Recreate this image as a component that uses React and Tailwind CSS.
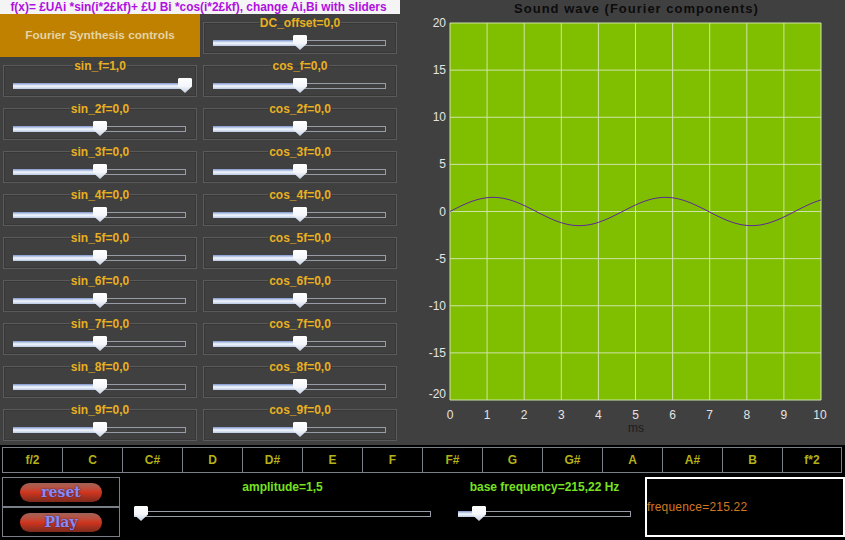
import React from "react";

const notes = ["f/2", "C", "C#", "D", "D#", "E", "F", "F#", "G", "G#", "A", "A#", "B", "f*2"];
const harmonics = ["2f", "3f", "4f", "5f", "6f", "7f", "8f", "9f"];

const Thumb = () => (
  <svg width="14" height="15" viewBox="0 0 14 15" className="block">
    <defs>
      <linearGradient id="thumbFill" x1="0" y1="0" x2="0" y2="1">
        <stop offset="0" stopColor="#ffffff" />
        <stop offset="0.55" stopColor="#f4f6fa" />
        <stop offset="1" stopColor="#c4cfe2" />
      </linearGradient>
    </defs>
    <path d="M1 0H13L14 1V8.5L7 15L0 8.5V1Z" fill="url(#thumbFill)" />
  </svg>
);

const Slider = ({ percent, width = "w-[173px]" }) => (
  <div className={`relative h-[6px] ${width} border border-[#979ca6]`}>
    <div
      className="h-[6px] -mt-[1px] -ml-[1px] bg-gradient-to-b from-[#7f96cc] via-[#f4f8fd] to-[#b9c8e2]"
      style={{ width: `${percent}%` }}
    />
    <div
      className="absolute top-[-6px] -ml-[7px]"
      style={{ left: `${percent}%` }}
    >
      <Thumb />
    </div>
  </div>
);

const SliderCell = ({ label, percent = 50 }) => (
  <div className="h-full flex flex-col justify-end px-[3px] pb-[3px]">
    <fieldset className="h-[40px] border border-[#5a5a5a] shadow-[inset_0_0_0_1px_#383838]">
      <legend className="mx-auto px-[1px] pt-[2px] text-[12px] leading-[14px] font-bold text-[#e8b020]">{label}</legend>
      <div className="mt-[10px] ml-[9px]">
        <Slider percent={percent} />
      </div>
    </fieldset>
  </div>
);

const PillButton = ({ label }) => (
  <div className="h-[30px] flex items-center justify-center border border-[#7a7f88]">
    <button className="w-[82px] h-[19px] rounded-full bg-gradient-to-b from-[#a06258] via-[#d0341c] to-[#7c2a1e] font-['DejaVu_Serif',serif] text-[14px] font-bold leading-[18px] text-[#8a8af4] [text-shadow:0_0_2px_#20205a]">
      {label}
    </button>
  </div>
);

const SoundWave = () => {
  const xOf = (t) => 450 + t * 37.1;
  const yOf = (v) => 211.5 - v * 9.425;
  const ticksX = [0, 1, 2, 3, 4, 5, 6, 7, 8, 9, 10];
  const ticksY = [20, 15, 10, 5, 0, -5, -10, -15, -20];
  const points = [];
  for (let i = 0; i <= 371; i++) {
    const t = i / 37.1;
    points.push(`${xOf(t).toFixed(1)},${yOf(1.5 * Math.sin(2 * Math.PI * 0.21522 * t)).toFixed(2)}`);
  }
  return (
    <svg width="445" height="431" viewBox="400 14 445 431" className="block">
      <rect x="450" y="23" width="371" height="377" fill="#80bf00" />
      {ticksX.map((t) => (
        <line key={t} x1={xOf(t)} x2={xOf(t)} y1="23" y2="400" stroke="#cfe3a8" strokeWidth="1" />
      ))}
      {ticksY.map((v) => (
        <line key={v} x1="450" x2="821" y1={yOf(v)} y2={yOf(v)} stroke="#cfe3a8" strokeWidth="1" />
      ))}
      <polyline points={points.join(" ")} fill="none" stroke="#5c2a96" strokeWidth="1" />
      {ticksY.map((v) => (
        <text
          key={v}
          x="446"
          y={v === -20 ? 398 : yOf(v) + 4}
          textAnchor="end"
          fontSize="12"
          fontFamily="Liberation Sans, sans-serif"
          fill="#e4e4e4"
        >
          {v}
        </text>
      ))}
      {ticksX.map((t) => (
        <text
          key={t}
          x={t === 10 ? 820 : xOf(t)}
          y="419"
          textAnchor="middle"
          fontSize="12"
          fontFamily="Liberation Sans, sans-serif"
          fill="#e4e4e4"
        >
          {t}
        </text>
      ))}
      <text x="636" y="432" textAnchor="middle" fontSize="12" fontFamily="Liberation Sans, sans-serif" fill="#1c1c1c">
        ms
      </text>
    </svg>
  );
};

const App = () => {
  return (
    <div className="w-[845px] h-[540px] overflow-hidden flex flex-col bg-[#404040] font-['Liberation_Sans',sans-serif]">
      <div className="h-[445px] flex">
        <div className="w-[400px]">
          <div className="h-[14px] pr-[3px] bg-[#f4f4f4] text-center text-[11.9px] leading-[14px] font-bold text-[#b010e0] whitespace-nowrap">
            f(x)= £UAi *sin(i*2£kf)+ £U Bi *cos(i*2£kf), change Ai,Bi with sliders
          </div>
          <div className="grid grid-cols-2 auto-rows-[43px]">
            <div className="h-full flex items-center justify-center bg-[#c08000] text-[11.8px] font-bold text-[#e4d4a4]">
              Fourier Synthesis controls
            </div>
            <SliderCell label="DC_offset=0,0" />
            <SliderCell label="sin_f=1,0" percent={100} />
            <SliderCell label="cos_f=0,0" />
            {harmonics.map((h) => (
              <React.Fragment key={h}>
                <SliderCell label={`sin_${h}=0,0`} />
                <SliderCell label={`cos_${h}=0,0`} />
              </React.Fragment>
            ))}
          </div>
        </div>
        <div className="flex-1">
          <div className="h-[14px] pl-[28px] text-center text-[13px] leading-[17px] font-bold tracking-[1px] text-[#0c0c0c] whitespace-nowrap">
            Sound wave (Fourier components)
          </div>
          <SoundWave />
        </div>
      </div>
      <div className="flex-1 bg-black pt-[2px] pl-[2px]">
        <div className="flex h-[26px]">
          {notes.map((n) => (
            <div
              key={n}
              className="w-[60px] flex items-center justify-center border border-r-0 last:border-r border-[#7a7f88] text-[12px] font-bold text-[#b4b018]"
            >
              {n}
            </div>
          ))}
        </div>
        <div className="flex mt-[4px]">
          <div className="w-[118px] flex flex-col">
            <PillButton label="reset" />
            <PillButton label="Play" />
          </div>
          <div className="w-[326px] pl-[14px] pt-[3px]">
            <div className="w-[297px] text-center text-[12px] leading-[14px] font-bold text-[#78e020]">
              amplitude=1,5
            </div>
            <div className="mt-[17px]">
              <Slider percent={2} width="w-[297px]" />
            </div>
          </div>
          <div className="w-[199px] pl-[12px] pt-[3px]">
            <div className="w-[173px] text-center text-[12px] leading-[14px] font-bold text-[#78e020] whitespace-nowrap">
              base frequency=215,22 Hz
            </div>
            <div className="mt-[17px]">
              <Slider percent={11.7} />
            </div>
          </div>
          <div className="w-[200px] h-[60px] flex items-center border-2 border-white text-[12px] tracking-[0.2px] text-[#d07820]">
            frequence=215.22
          </div>
        </div>
      </div>
    </div>
  );
};

export default App;
